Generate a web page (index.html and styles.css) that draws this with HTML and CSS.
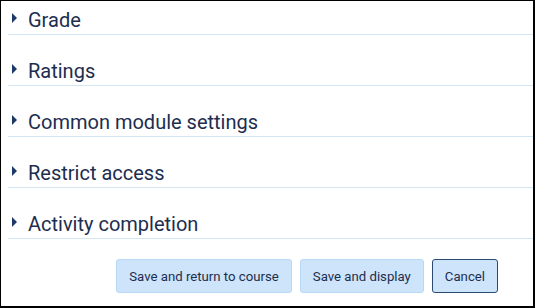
FILE: index.html
```html
<!DOCTYPE html>
<html>
<head>
<meta charset="utf-8">
<link rel="stylesheet" href="styles.css">
</head>
<body>
<div class="frame">
  <div class="sections">
    <div class="section"><span class="caret"></span><span class="title">Grade</span></div>
    <div class="section"><span class="caret"></span><span class="title">Ratings</span></div>
    <div class="section"><span class="caret"></span><span class="title">Common module settings</span></div>
    <div class="section"><span class="caret"></span><span class="title">Restrict access</span></div>
    <div class="section"><span class="caret"></span><span class="title">Activity completion</span></div>
  </div>
  <div class="actions">
    <button class="btn">Save and return to course</button>
    <button class="btn">Save and display</button>
    <button class="btn btn-cancel">Cancel</button>
  </div>
</div>
</body>
</html>
```
FILE: styles.css
```css
html, body {
  margin: 0;
  padding: 0;
  background: #fff;
}
.frame {
  box-sizing: border-box;
  width: 535px;
  height: 308px;
  border-top: 1px solid #000;
  border-left: 1px solid #000;
  border-right: 2px solid #000;
  border-bottom: 2px solid #000;
  padding-left: 7px;
  font-family: Roboto, Lato, "Liberation Sans", sans-serif;
  color: #1d2d4f;
}
.sections {
  display: flex;
  flex-direction: column;
  gap: 17px;
}
.section {
  display: flex;
  align-items: center;
  height: 33px;
  border-bottom: 1px solid #d3e6f2;
}
.caret {
  width: 0;
  height: 0;
  border-top: 5px solid transparent;
  border-bottom: 5px solid transparent;
  border-left: 5px solid #1d3a66;
  margin-left: 4px;
  margin-right: 11px;
}
.title {
  font-size: 20px;
  font-weight: 400;
  line-height: 24px;
  margin-top: 4px;
}
.actions {
  display: flex;
  justify-content: flex-end;
  gap: 8px;
  padding-right: 35px;
  margin-top: 20px;
}
.btn {
  font-family: Roboto, Lato, "Liberation Sans", sans-serif;
  font-size: 13.2px;
  color: #1d2d4f;
  background: #cde4fa;
  border: 1px solid #b9d8f4;
  border-radius: 3px;
  height: 34px;
  padding: 0 12px;
}
.btn-cancel {
  border-color: #2b4a70;
}
```
